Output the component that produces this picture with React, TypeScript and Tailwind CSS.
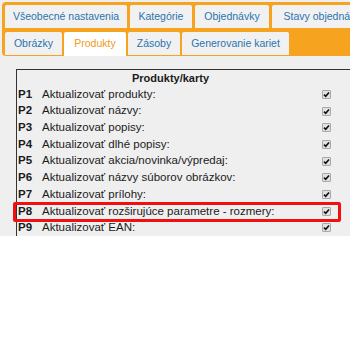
import React from 'react'

const rows = [
  { id: 'P1', label: 'Aktualizovať produkty:' },
  { id: 'P2', label: 'Aktualizovať názvy:' },
  { id: 'P3', label: 'Aktualizovať popisy:' },
  { id: 'P4', label: 'Aktualizovať dlhé popisy:' },
  { id: 'P5', label: 'Aktualizovať akcia/novinka/výpredaj:' },
  { id: 'P6', label: 'Aktualizovať názvy súborov obrázkov:' },
  { id: 'P7', label: 'Aktualizovať prílohy:' },
  { id: 'P8', label: 'Aktualizovať rozširujúce parametre - rozmery:', marked: true },
  { id: 'P9', label: 'Aktualizovať EAN:' },
]

const topTabs = [
  { label: 'Všeobecné nastavenia', w: 'w-[122px]' },
  { label: 'Kategórie', w: 'w-[62px]' },
  { label: 'Objednávky', w: 'w-[74px]' },
  { label: 'Stavy objednávok', w: 'w-[106px]' },
]

const bottomTabs = [
  { label: 'Obrázky', w: 'w-[57px]' },
  { label: 'Produkty', w: 'w-[62px]', active: true },
  { label: 'Zásoby', w: 'w-[52px]' },
  { label: 'Generovanie kariet', w: 'w-[107px]' },
]

function Tab({ label, w, active }: { label: string; w: string; active?: boolean }) {
  return (
    <div
      className={
        active
          ? `${w} h-[24px] shrink-0 rounded-t-[2px] bg-white flex items-center justify-center text-[#f29a22] whitespace-nowrap`
          : `${w} h-[23px] shrink-0 rounded-t-[2px] bg-[#f1f1f1] flex items-center justify-center text-[#2b73b0] whitespace-nowrap`
      }
    >
      {label}
    </div>
  )
}

function Check() {
  return (
    <div className="w-[9px] h-[9px] border border-[#a8a8a8] bg-[#e2e2e2] rounded-[1px] flex items-center justify-center">
      <svg width="7" height="7" viewBox="0 0 7 7">
        <path d="M1 3.6 L2.7 5.3 L6 1.4" fill="none" stroke="#111" strokeWidth="1.6" />
      </svg>
    </div>
  )
}

export default function App() {
  return (
    <div className="w-[350px] h-[350px] bg-white overflow-hidden" style={{ fontFamily: '"Liberation Sans", Arial, sans-serif' }}>
      <div className="h-[236px] bg-[#efefef] pt-[2px] pl-[2px] overflow-hidden">
        {/* taby */}
        <div className="w-[400px] bg-[#f6a31f] rounded-l-[4px] pt-[3px] pl-[3px] pb-px flex flex-col gap-[4px] text-[10.5px]">
          <div className="flex gap-[3px]">
            {topTabs.map((t) => (
              <Tab key={t.label} {...t} />
            ))}
          </div>
          <div className="flex items-start gap-[2px] -mb-px">
            {bottomTabs.map((t) => (
              <Tab key={t.label} {...t} />
            ))}
          </div>
        </div>

        {/* tabuľka */}
        <div className="ml-[14px] mt-[13px] w-[340px] border-t border-l border-[#333] text-[11.5px] text-[#1b1b1b]">
          <div className="w-[307px] h-[16px] flex items-center justify-center font-bold text-[11px]">Produkty/karty</div>
          {rows.map((r) => (
            <div key={r.id} className="relative h-[16.7px] flex items-center">
              <span className="w-[25px] pl-px font-bold">{r.id}</span>
              <span className="flex-1 whitespace-nowrap">{r.label}</span>
              <div className="w-[34px] flex">
                <Check />
              </div>
              {r.marked && (
                <div className="absolute left-[-4px] top-[-1px] w-[328px] h-[20px] border-[3px] border-[#f01010] rounded-[2px]" />
              )}
            </div>
          ))}
        </div>
      </div>
    </div>
  )
}
